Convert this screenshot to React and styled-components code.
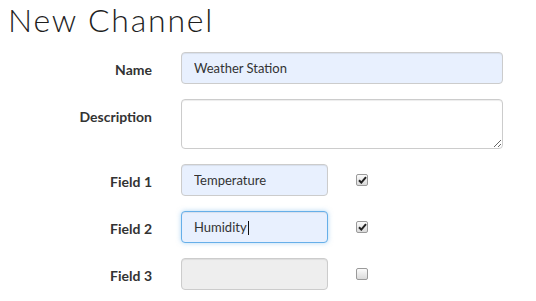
import React from "react";
import styled, { createGlobalStyle, css } from "styled-components";

const Global = createGlobalStyle`
  html, body { margin: 0; padding: 0; background: #fff; }
  body { font-family: "Lato", "Liberation Sans", sans-serif; color: #333; }
`;

const Page = styled.div`
  padding: 0 8px;
`;

const Title = styled.h1`
  margin: 0;
  height: 52px;
  font-family: "Lato", "Liberation Sans", sans-serif;
  font-weight: 300;
  font-size: 32px;
  line-height: 40px;
  letter-spacing: 1.8px;
  color: #1e1e1e;
  box-sizing: border-box;
`;

const Form = styled.div`
  display: grid;
  grid-template-columns: 144px 322px;
  column-gap: 29px;
  row-gap: 15px;
`;

const Label = styled.label`
  text-align: right;
  font-weight: 700;
  font-size: 14px;
  line-height: 20px;
  padding-top: 8px;
  color: #333;
`;

const boxCss = css`
  box-sizing: border-box;
  height: 32px;
  padding: 6px 12px;
  font-family: "Lato", "Liberation Sans", sans-serif;
  font-size: 13px;
  line-height: 20px;
  color: #333;
  border: 1px solid #ccc;
  border-radius: 4px;
  background: ${(p) => (p.$disabled ? "#eee" : "#e8f0fe")};
  box-shadow: inset 0 1px 1px rgba(0, 0, 0, 0.075);
  outline: none;
`;

const Input = styled.input`
  ${boxCss}
  width: ${(p) => p.$width || "100%"};
  display: block;
`;

const FocusedBox = styled.div`
  ${boxCss}
  width: ${(p) => p.$width || "100%"};
  border-color: #66afe9;
  box-shadow: inset 0 1px 1px rgba(0, 0, 0, 0.075), 0 0 5px rgba(102, 175, 233, 0.5);
  display: flex;
  align-items: center;
`;

const Caret = styled.span`
  display: inline-block;
  width: 1px;
  height: 14px;
  background: #111;
  margin-left: 1px;
  margin-top: 2px;
`;

const TextArea = styled.textarea`
  box-sizing: border-box;
  width: 100%;
  height: 50px;
  border: 1px solid #ccc;
  border-radius: 4px;
  background: #fff;
  box-shadow: inset 0 1px 1px rgba(0, 0, 0, 0.075);
  padding: 6px 12px;
  font-family: "Lato", "Liberation Sans", sans-serif;
  font-size: 13px;
  outline: none;
  display: block;
`;

const FieldRow = styled.div`
  display: flex;
  align-items: center;
  gap: 28px;
`;

const Check = styled.span`
  box-sizing: border-box;
  width: 12px;
  height: 12px;
  border: 1px solid #9a9a9a;
  border-radius: 2px;
  background: linear-gradient(#fbfbfb, #dadada);
  display: inline-flex;
  align-items: center;
  justify-content: center;
`;

function CheckBox({ checked }) {
  return (
    <Check role="checkbox" aria-checked={checked}>
      {checked && (
        <svg width="9" height="8" viewBox="0 0 9 8">
          <path d="M1 4.2 L3.3 6.6 L8 1.2" fill="none" stroke="#222" strokeWidth="2" />
        </svg>
      )}
    </Check>
  );
}

export default function App() {
  return (
    <Page>
      <Global />
      <Title>New Channel</Title>
      <Form>
        <Label>Name</Label>
        <Input readOnly value="Weather Station" />

        <Label>Description</Label>
        <TextArea readOnly value="" />

        <Label>Field 1</Label>
        <FieldRow>
          <Input readOnly value="Temperature" $width="147px" />
          <CheckBox checked />
        </FieldRow>

        <Label>Field 2</Label>
        <FieldRow>
          <FocusedBox $width="147px">
            Humidity
            <Caret />
          </FocusedBox>
          <CheckBox checked />
        </FieldRow>

        <Label>Field 3</Label>
        <FieldRow>
          <Input readOnly disabled value="" $width="147px" $disabled />
          <CheckBox />
        </FieldRow>
      </Form>
    </Page>
  );
}
